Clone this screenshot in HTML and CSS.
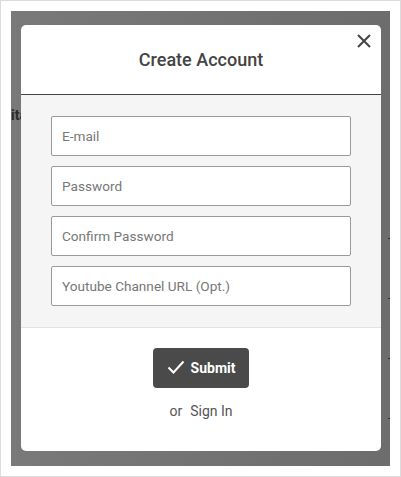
FILE: index.html
```html
<!DOCTYPE html>
<html>
<head>
<meta charset="utf-8">
<link rel="stylesheet" href="styles.css">
</head>
<body>
<div class="frame">
  <div class="backdrop">
    <span class="bg-text">ita</span>
    <span class="mark m1"></span>
    <span class="mark m2"></span>
    <span class="mark m3"></span>
    <span class="mark m4"></span>
    <div class="modal">
      <div class="modal-header">
        <h2 class="title">Create Account</h2>
        <button class="close" aria-label="Close">
          <svg width="14" height="14" viewBox="0 0 14 14"><path d="M1 1L13 13M13 1L1 13" stroke="#444" stroke-width="2" fill="none"/></svg>
        </button>
      </div>
      <form class="modal-body">
        <input class="field" type="text" placeholder="E-mail">
        <input class="field" type="password" placeholder="Password">
        <input class="field" type="password" placeholder="Confirm Password">
        <input class="field" type="text" placeholder="Youtube Channel URL (Opt.)">
      </form>
      <div class="modal-footer">
        <button class="submit">
          <svg width="18" height="14" viewBox="0 0 18 14"><path d="M1.5 7.5L6.5 12.5L16.5 1.5" stroke="#fff" stroke-width="2" fill="none"/></svg>
          <span>Submit</span>
        </button>
        <div class="alt"><span class="or">or</span><span class="signin">Sign In</span></div>
      </div>
    </div>
  </div>
</div>
</body>
</html>
```

FILE: styles.css
```css
* { box-sizing: border-box; }
html, body { margin: 0; padding: 0; background: #fff; }
.frame {
  width: 401px;
  height: 477px;
  border: 1px solid #dcdcdc;
  padding: 10px 9px 10px 10px;
  background: #fff;
}
.backdrop {
  position: relative;
  width: 379px;
  height: 455px;
  background: linear-gradient(to right, #797979 0%, #737373 50%, #6d6d6d 100%);
  overflow: hidden;
  padding: 14px 9px 0 10px;
}
.bg-text {
  position: absolute;
  left: 0;
  top: 96px;
  font-family: Roboto, "Liberation Sans", sans-serif;
  font-size: 14px;
  font-weight: 700;
  color: #2a2a2a;
}
.mark {
  position: absolute;
  left: 377px;
  width: 3px;
  height: 1px;
  background: #1f2a5a;
}
.m1 { top: 227px; }
.m2 { top: 287px; }
.m3 { top: 347px; }
.m4 { top: 407px; }
.modal {
  position: relative;
  width: 360px;
  height: 426px;
  background: #fff;
  border-radius: 5px;
  display: flex;
  flex-direction: column;
  overflow: hidden;
}
.modal-header {
  position: relative;
  height: 70px;
  border-bottom: 1px solid #444;
  display: flex;
  align-items: center;
  justify-content: center;
  padding-bottom: 1px;
}
.title {
  margin: 0;
  font-family: Roboto, "Liberation Sans", sans-serif;
  font-size: 18px;
  font-weight: 500;
  color: #444;
}
.close {
  position: absolute;
  right: 10px;
  top: 9px;
  padding: 0;
  border: 0;
  background: none;
  width: 14px;
  height: 14px;
  display: block;
}
.close svg { display: block; }
.modal-body {
  margin: 0;
  background: #f5f5f5;
  border-bottom: 1px solid #e2e2e2;
  padding: 21px 30px 21px 30px;
  display: flex;
  flex-direction: column;
  gap: 10px;
}
.field {
  width: 300px;
  height: 40px;
  border: 1px solid #9a9a9a;
  border-radius: 2px;
  background: #fff;
  padding: 0 10px;
  font-family: Roboto, "Liberation Sans", sans-serif;
  font-size: 13.6px;
  color: #333;
  outline: none;
}
.field::placeholder { color: #777; }
.modal-footer {
  flex: 1;
  display: flex;
  flex-direction: column;
  align-items: center;
  padding-top: 20px;
}
.submit {
  width: 96px;
  height: 40px;
  border: 0;
  border-radius: 4px;
  background: #4a4a4a;
  color: #fff;
  display: flex;
  align-items: center;
  justify-content: center;
  gap: 6px;
  padding: 0;
  font-family: Roboto, "Liberation Sans", sans-serif;
  font-size: 14px;
  font-weight: 700;
}
.submit svg { display: block; margin-top: -2px; }
.alt {
  margin-top: 15px;
  font-family: Roboto, "Liberation Sans", sans-serif;
  font-size: 14px;
  color: #555;
  display: flex;
  gap: 8px;
}
```
